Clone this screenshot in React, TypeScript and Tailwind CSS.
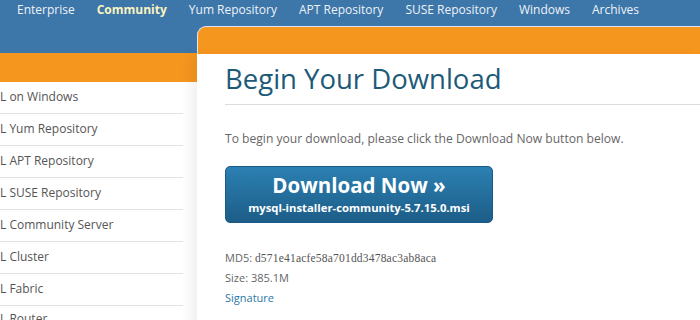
import React from "react";

const navItems = ["Enterprise", "Community", "Yum Repository", "APT Repository", "SUSE Repository", "Windows", "Archives"];

const sideItems = [
  "L on Windows",
  "L Yum Repository",
  "L APT Repository",
  "L SUSE Repository",
  "L Community Server",
  "L Cluster",
  "L Fabric",
  "L Router",
];

const App = () => {
  return (
    <div className="w-[700px] h-[320px] overflow-hidden bg-white font-['Open_Sans',sans-serif]">
      {/* top nav */}
      <div className="h-[26px] bg-[#3d76a8] flex items-start pt-[2px] pl-[6px]">
        {navItems.map(item => (
          <span
            key={item}
            className={
              item === "Community"
                ? "px-[11px] text-[12px] leading-[16px] font-bold text-[#fbf3c0]"
                : "px-[11px] text-[12px] leading-[16px] text-[#eef3f8]"
            }
          >
            {item}
          </span>
        ))}
      </div>

      <div className="flex">
        {/* left column */}
        <div className="w-[197px] shrink-0">
          <div className="h-[27px] bg-[#3d76a8]" />
          <div className="h-[29px] bg-[#f5961f]" />
          <ul className="w-[183px]">
            {sideItems.map((item, i) => (
              <li
                key={item}
                className={
                  i < sideItems.length - 1
                    ? "h-[32px] flex items-center pb-[2px] text-[12px] text-[#555] border-b border-[#e2e2e2]"
                    : "h-[32px] flex items-start pt-[4px] text-[12px] text-[#555]"
                }
              >
                {item}
              </li>
            ))}
          </ul>
        </div>

        {/* main */}
        <div className="flex-1 flex flex-col">
          <div className="bg-[#3d76a8]">
            <div className="h-[28px] bg-[#f5961f] rounded-tl-[9px] border-t border-l border-[#dfe8f0]" />
          </div>
          <div className="relative flex-1 bg-white shadow-[-8px_0_10px_rgba(0,0,0,0.05)] pl-[28px]">
            <h1 className="text-[27.5px] font-medium leading-[34px] text-[#1d5a78] mt-[8px] pb-[8px] border-b border-[#dcdcdc]">
              Begin Your Download
            </h1>
            <p className="text-[12.1px] text-[#666] mt-[25px]">
              To begin your download, please click the Download Now button below.
            </p>
            <button className="mt-[18px] w-[268px] h-[57px] rounded-[5px] bg-gradient-to-b from-[#2b80b2] to-[#1d5d88] border border-[#1a5a86] flex flex-col items-center justify-center text-white">
              <span className="text-[20.5px] font-bold leading-[25px]">Download Now »</span>
              <span className="text-[11.3px] font-bold leading-[18px] mt-[1px]">mysql-installer-community-5.7.15.0.msi</span>
            </button>
            <div className="mt-[25px] text-[11px] text-[#666] leading-[20px]">
              <div>
                MD5: <span className="font-['Liberation_Serif',serif] text-[11.5px] tracking-[0.2px] text-[#555]">d571e41acfe58a701dd3478ac3ab8aca</span>
              </div>
              <div>Size: 385.1M</div>
              <div className="text-[#2a78a8]">Signature</div>
            </div>
          </div>
        </div>
      </div>
    </div>
  );
};

export default App;
